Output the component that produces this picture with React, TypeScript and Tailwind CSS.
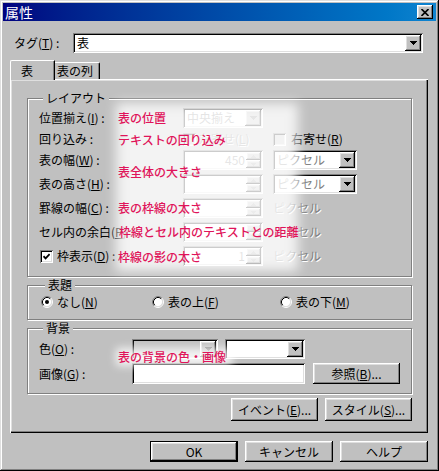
import type { ReactNode } from 'react';

const raised = 'shadow-[inset_-1px_-1px_#000,inset_1px_1px_#fff,inset_-2px_-2px_#808080,inset_2px_2px_#dfdfdf]';
const sunken = 'shadow-[inset_1px_1px_#808080,inset_-1px_-1px_#fff,inset_2px_2px_#000,inset_-2px_-2px_#dfdfdf]';
const etched = 'border border-[#808080] shadow-[inset_1px_1px_#fff,1px_1px_#fff]';
const dimText = 'text-[#808080] [text-shadow:1px_1px_#fff]';

function Arrow({ dim }: { dim?: boolean }) {
  const c = dim ? '#808080' : '#000';
  return (
    <svg width="7" height="4" viewBox="0 0 7 4" shapeRendering="crispEdges">
      <rect x="0" y="0" width="7" height="1" fill={c} />
      <rect x="1" y="1" width="5" height="1" fill={c} />
      <rect x="2" y="2" width="3" height="1" fill={c} />
      <rect x="3" y="3" width="1" height="1" fill={c} />
    </svg>
  );
}

function DropBtn({ dim }: { dim?: boolean }) {
  return (
    <div className={`w-[16px] h-full bg-[#c0c0c0] flex items-center justify-center ${raised}`}>
      <Arrow dim={dim} />
    </div>
  );
}

function Combo({ text, w, dim, arrowDim, grayField }: { text?: string; w: string; dim?: boolean; arrowDim?: boolean; grayField?: boolean }) {
  return (
    <div className={`${w} h-[20px] bg-white p-[2px] flex ${sunken}`}>
      <div className={`flex-1 flex items-center pl-[2px] ${grayField ? 'bg-[#c0c0c0]' : ''} ${dim ? dimText : ''}`}>{text}</div>
      <DropBtn dim={arrowDim} />
    </div>
  );
}

function SpinHalf({ up }: { up?: boolean }) {
  return (
    <div className={`flex-1 bg-[#c0c0c0] flex items-center justify-center ${raised}`}>
      <svg width="5" height="3" viewBox="0 0 5 3" shapeRendering="crispEdges" className={up ? 'rotate-180' : ''}>
        <rect x="0" y="0" width="5" height="1" fill="#a0a0a0" />
        <rect x="1" y="1" width="3" height="1" fill="#a0a0a0" />
        <rect x="2" y="2" width="1" height="1" fill="#a0a0a0" />
      </svg>
    </div>
  );
}

function Spin({ value }: { value?: string }) {
  return (
    <div className={`w-[80px] h-[20px] bg-white p-[2px] flex ${sunken}`}>
      <div className={`flex-1 flex items-center justify-end pr-[1px] ${dimText}`}>{value}</div>
      <div className="w-[15px] flex flex-col">
        <SpinHalf up />
        <SpinHalf />
      </div>
    </div>
  );
}

function Checkbox({ checked, gray }: { checked?: boolean; gray?: boolean }) {
  return (
    <div className={`w-[13px] h-[13px] shrink-0 flex items-center justify-center ${gray ? 'bg-[#c0c0c0]' : 'bg-white'} ${sunken}`}>
      {checked && (
        <svg width="7" height="7" viewBox="0 0 7 7">
          <path d="M0.5 3.2 L2.6 5.4 L6.6 1.2" stroke="#000" strokeWidth="1.8" fill="none" />
        </svg>
      )}
    </div>
  );
}

function Radio({ checked }: { checked?: boolean }) {
  return (
    <svg width="12" height="12" viewBox="0 0 12 12" className="shrink-0">
      <circle cx="6" cy="6" r="4.5" fill="#fff" />
      <path d="M2.11 9.89A5.5 5.5 0 0 1 9.89 2.11" stroke="#808080" fill="none" />
      <path d="M9.89 2.11A5.5 5.5 0 0 1 2.11 9.89" stroke="#fff" fill="none" />
      <path d="M2.82 9.18A4.5 4.5 0 0 1 9.18 2.82" stroke="#000" fill="none" />
      <path d="M9.18 2.82A4.5 4.5 0 0 1 2.82 9.18" stroke="#dfdfdf" fill="none" />
      {checked && <circle cx="6" cy="6" r="2" fill="#000" />}
    </svg>
  );
}

function Button({ children, w, h, def }: { children: ReactNode; w: string; h: string; def?: boolean }) {
  if (def) {
    return (
      <div className={`${w} ${h} border border-black flex`}>
        <div className={`flex-1 flex items-center justify-center bg-[#c0c0c0] ${raised}`}>{children}</div>
      </div>
    );
  }
  return <div className={`${w} ${h} flex items-center justify-center bg-[#c0c0c0] ${raised}`}>{children}</div>;
}

function Group({ title, children, className }: { title: string; children: ReactNode; className: string }) {
  return (
    <div className={`${etched} ${className}`}>
      <span className="block w-fit -mt-[8px] ml-[4px] px-[3px] bg-[#c0c0c0] leading-[14px]">{title}</span>
      {children}
    </div>
  );
}

const notes = [
  { text: '表の位置', cls: 'top-[111px] left-[118px]' },
  { text: 'テキストの回り込み', cls: 'top-[133px] left-[118px]' },
  { text: '表全体の大きさ', cls: 'top-[165px] left-[118px]' },
  { text: '表の枠線の太さ', cls: 'top-[201px] left-[118px]' },
  { text: '枠線とセル内のテキストとの距離', cls: 'top-[225px] left-[119px]' },
  { text: '枠線の影の太さ', cls: 'top-[250px] left-[118px]' },
  { text: '表の背景の色・画像', cls: 'top-[350px] left-[118px]' },
];

export default function App() {
  return (
    <div className="relative w-[439px] h-[471px] bg-[#c0c0c0] p-[3px] flex flex-col text-[12px] leading-[14px] text-black [font-family:'Noto_Sans_CJK_JP',sans-serif] shadow-[inset_-1px_-1px_#000,inset_1px_1px_#dfdfdf,inset_-2px_-2px_#808080,inset_2px_2px_#fff]">
      {/* title bar */}
      <div className="h-[18px] flex items-center justify-between pl-[2px] pr-[3px] bg-linear-to-r from-[#000080] to-[#1084d0]">
        <span className="text-white text-[14px] leading-[16px]">属性</span>
        <div className={`w-[16px] h-[14px] bg-[#c0c0c0] flex items-center justify-center ${raised}`}>
          <svg width="8" height="7" viewBox="0 0 8 7">
            <path d="M0.5 0 L7.5 7 M7.5 0 L0.5 7" stroke="#000" strokeWidth="1.6" />
          </svg>
        </div>
      </div>

      {/* tag row */}
      <div className="mt-[12px] flex items-center pl-[11px]">
        <span className="w-[59px]">タグ(<u>T</u>) :</span>
        <div className={`w-[350px] h-[20px] bg-white p-[2px] flex ${sunken}`}>
          <span className="flex-1 pl-[2px] flex items-center">表</span>
          <DropBtn />
        </div>
      </div>

      {/* tabs */}
      <div className="mt-[7px] ml-[7px] h-[20px] flex items-end relative z-10">
        <div className="w-[45px] h-[20px] bg-[#c0c0c0] border-l border-t border-white border-r border-r-black rounded-tl-[2px] shadow-[inset_-1px_0_#808080] pl-[10px] pt-[3px]">
          表
        </div>
        <div className="w-[45px] h-[17px] mb-[1px] bg-[#c0c0c0] border-t border-white border-r border-r-black rounded-tr-[2px] shadow-[inset_-1px_0_#808080] pl-[2px] pt-[1px]">
          表の列
        </div>
      </div>

      {/* tab panel */}
      <div className="ml-[7px] -mt-[1px] w-[418px] h-[354px] flex flex-col pt-[19px] pl-[17px] pr-[16px] shadow-[inset_1px_1px_#fff,inset_-1px_-1px_#000,inset_-2px_-2px_#808080,inset_2px_2px_#dfdfdf]">
        <Group title="レイアウト" className="h-[179px] pl-[11px] flex flex-col">
          <div className="mt-[3px] h-[20px] flex items-center">
            <span className="w-[144px]">位置揃え(<u>I</u>) :</span>
            <Combo w="w-[80px]" text="中央揃え" dim arrowDim />
          </div>
          <div className="h-[22px] flex items-center">
            <span className="w-[144px]">回り込み :</span>
            <div className="w-[90px] flex items-center gap-[3px]">
              <Checkbox gray />
              <span className={dimText}>左寄せ(<u>L</u>)</span>
            </div>
            <div className="flex items-center gap-[5px]">
              <Checkbox gray />
              <span>右寄せ(<u>R</u>)</span>
            </div>
          </div>
          <div className="flex flex-col gap-[4px]">
            <div className="h-[20px] flex items-center">
              <span className="w-[144px]">表の幅(<u>W</u>) :</span>
              <Spin value="450" />
              <div className="ml-[10px]">
                <Combo w="w-[84px]" text="ピクセル" dim />
              </div>
            </div>
            <div className="h-[20px] flex items-center">
              <span className="w-[144px]">表の高さ(<u>H</u>) :</span>
              <Spin />
              <div className="ml-[10px]">
                <Combo w="w-[84px]" text="ピクセル" dim />
              </div>
            </div>
            <div className="h-[20px] flex items-center">
              <span className="w-[144px]">罫線の幅(<u>C</u>) :</span>
              <Spin />
              <span className={`ml-[10px] ${dimText}`}>ピクセル</span>
            </div>
            <div className="h-[20px] flex items-center">
              <span className="w-[144px]">セル内の余白(<u>P</u>) :</span>
              <Spin />
              <span className={`ml-[10px] ${dimText}`}>ピクセル</span>
            </div>
            <div className="h-[20px] flex items-center">
              <div className="w-[144px] flex items-center pl-[1px] gap-[4px]">
                <Checkbox checked />
                <span>枠表示(<u>D</u>) :</span>
              </div>
              <Spin value="1" />
              <span className={`ml-[10px] ${dimText}`}>ピクセル</span>
            </div>
          </div>
        </Group>

        <Group title="表題" className="mt-[8px] h-[35px] pl-[13px]">
          <div className="h-[20px] flex items-center">
            <div className="w-[111px] flex items-center gap-[4px]">
              <Radio checked />
              <span>なし(<u>N</u>)</span>
            </div>
            <div className="w-[128px] flex items-center gap-[4px]">
              <Radio />
              <span>表の上(<u>F</u>)</span>
            </div>
            <div className="flex items-center gap-[4px]">
              <Radio />
              <span>表の下(<u>M</u>)</span>
            </div>
          </div>
        </Group>

        <Group title="背景" className="mt-[8px] h-[66px] pl-[11px]">
          <div className="mt-[4px] h-[20px] flex items-center">
            <span className="w-[93px]">色(<u>O</u>) :</span>
            <Combo w="w-[86px]" grayField arrowDim />
            <div className="ml-[7px]">
              <Combo w="w-[80px]" />
            </div>
          </div>
          <div className="mt-[4px] h-[21px] flex items-center">
            <span className="w-[93px]">画像(<u>G</u>) :</span>
            <div className={`w-[173px] h-[21px] bg-white ${sunken}`} />
            <div className="ml-[8px]">
              <Button w="w-[87px]" h="h-[21px]">参照(<u>B</u>)...</Button>
            </div>
          </div>
        </Group>

        <div className="mt-[4px] flex justify-end gap-[7px]">
          <Button w="w-[87px]" h="h-[23px]">イベント(<u>E</u>)...</Button>
          <Button w="w-[87px]" h="h-[23px]">スタイル(<u>S</u>)...</Button>
        </div>
      </div>

      {/* dialog buttons */}
      <div className="mt-[8px] pr-[8px] flex justify-end gap-[7px]">
        <Button w="w-[88px]" h="h-[21px]" def>OK</Button>
        <Button w="w-[88px]" h="h-[21px]">キャンセル</Button>
        <Button w="w-[88px]" h="h-[21px]">ヘルプ</Button>
      </div>

      {/* annotation glow */}
      <div className="absolute left-[116px] top-[103px] w-[182px] h-[168px] bg-white/80 blur-[6px]" />
      <div className="absolute left-[116px] top-[348px] w-[116px] h-[18px] bg-white/80 blur-[4px]" />

      {notes.map(n => (
        <span key={n.text} className={`absolute ${n.cls} text-[#e0145a] font-medium leading-[14px] whitespace-nowrap`}>
          {n.text}
        </span>
      ))}
    </div>
  );
}
